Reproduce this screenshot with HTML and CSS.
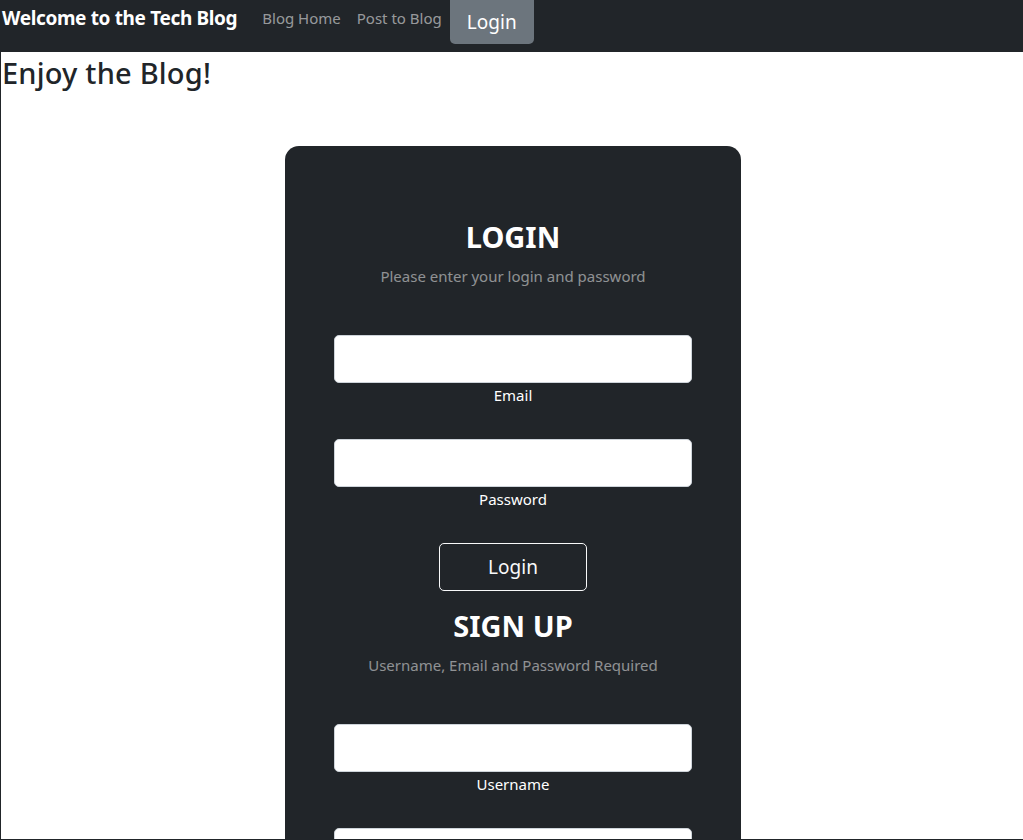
FILE: index.html
```html
<!DOCTYPE html>
<html lang="en">
<head>
<meta charset="utf-8">
<title>Tech Blog</title>
<link rel="stylesheet" href="styles.css">
</head>
<body>
<div class="frame"></div>
<nav class="navbar">
  <a class="brand" href="#">Welcome to the Tech Blog</a>
  <a class="nav-link" href="#">Blog Home</a>
  <a class="nav-link" href="#">Post to Blog</a>
  <a class="nav-btn" href="#">Login</a>
</nav>
<h3 class="page-title">Enjoy the Blog!</h3>
<main class="wrap">
  <section class="card">
    <h2 class="card-title">LOGIN</h2>
    <p class="card-sub">Please enter your login and password</p>
    <div class="field">
      <input class="input" type="email" id="email">
      <label class="label" for="email">Email</label>
    </div>
    <div class="field">
      <input class="input" type="password" id="pw">
      <label class="label" for="pw">Password</label>
    </div>
    <button class="btn-outline" type="button">Login</button>
    <h2 class="card-title second">SIGN UP</h2>
    <p class="card-sub">Username, Email and Password Required</p>
    <div class="field">
      <input class="input" type="text" id="user">
      <label class="label" for="user">Username</label>
    </div>
    <div class="field">
      <input class="input" type="email" id="email2">
      <label class="label" for="email2">Email</label>
    </div>
    <div class="field">
      <input class="input" type="password" id="pw2">
      <label class="label" for="pw2">Password</label>
    </div>
    <button class="btn-outline" type="button">Sign Up</button>
  </section>
</main>
</body>
</html>
```
FILE: styles.css
```css
* { box-sizing: border-box; }
html, body { margin: 0; padding: 0; }
body {
  font-family: "Noto Sans", "Open Sans", sans-serif;
  color: #212529;
  background: #fff;
}
.frame {
  position: fixed;
  inset: 0;
  border-left: 1px solid #212529;
  border-bottom: 1px solid #212529;
  pointer-events: none;
  z-index: 10;
}
.navbar {
  display: flex;
  align-items: flex-start;
  height: 52px;
  background: #212529;
  padding-left: 2px;
}
.brand {
  color: #fff;
  font-weight: 700;
  font-size: 19px;
  line-height: 30px;
  padding: 3px 0;
  margin-right: 17px;
  text-decoration: none;
  letter-spacing: -0.35px;
}
.nav-link {
  color: rgba(255,255,255,.55);
  font-size: 15px;
  line-height: 24px;
  padding: 6px 8px;
  text-decoration: none;
}
.nav-btn {
  background: #6c757d;
  color: #fff;
  font-size: 19px;
  line-height: 44px;
  height: 44px;
  width: 84px;
  text-align: center;
  border-radius: 0 0 5px 5px;
  text-decoration: none;
}
.page-title {
  margin: 0;
  padding-left: 2px;
  font-size: 29px;
  font-weight: 500;
  line-height: 42px;
  letter-spacing: 0.2px;
}
.wrap {
  display: flex;
  justify-content: center;
  padding-top: 52px;
  padding-left: 3px;
}
.card {
  width: 456px;
  background: #212529;
  border-radius: 14px;
  padding: 72px 49px 48px;
  display: flex;
  flex-direction: column;
  align-items: center;
  color: #fff;
}
.card-title {
  margin: 0 0 8px;
  font-size: 29px;
  font-weight: 700;
  line-height: 38px;
}
.card-title.second { margin-top: 16px; }
.card-sub {
  margin: 0 0 47px;
  font-size: 15px;
  line-height: 24px;
  color: rgba(255,255,255,.5);
}
.field {
  width: 100%;
  display: flex;
  flex-direction: column;
  align-items: center;
  margin-bottom: 32px;
}
.input {
  width: 100%;
  height: 48px;
  border: 1px solid #ced4da;
  border-radius: 5px;
  background: #fff;
  font-size: 20px;
  padding: 8px 16px;
}
.label {
  font-size: 15px;
  line-height: 24px;
  color: #fff;
}
.btn-outline {
  width: 148px;
  height: 48px;
  border: 1px solid #f8f9fa;
  border-radius: 5px;
  background: transparent;
  color: #f8f9fa;
  font-family: inherit;
  font-size: 19px;
}
```
